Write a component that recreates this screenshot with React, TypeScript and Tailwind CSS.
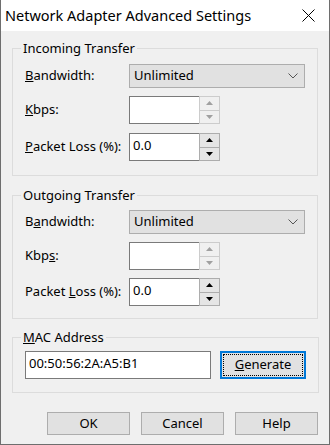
import React from "react";

const font = { fontFamily: '"Noto Sans", "Open Sans", sans-serif' };

function Combo() {
  return (
    <div className="w-[176px] h-[24px] bg-[#e1e1e1] border border-[#adadad] flex items-center pl-[4px] pr-[5px]">
      <span className="flex-1">Unlimited</span>
      <svg width="10" height="6" viewBox="0 0 10 6" className="mr-[1px]">
        <path d="M0.5 0.5 L5 5 L9.5 0.5" fill="none" stroke="#555" strokeWidth="1" />
      </svg>
    </div>
  );
}

function Arrow({ up, color }: { up: boolean; color: string }) {
  return (
    <svg width="7" height="4" viewBox="0 0 7 4">
      {up ? <path d="M0 4 L3.5 0 L7 4 Z" fill={color} /> : <path d="M0 0 L3.5 4 L7 0 Z" fill={color} />}
    </svg>
  );
}

function Spin({ value, disabled }: { value: string; disabled?: boolean }) {
  const bc = disabled ? "border-[#cccccc]" : "border-[#adadad]";
  const bg = disabled ? "bg-[#f0f0f0]" : "bg-[#e5e5e5]";
  const ac = disabled ? "#a0a0a0" : "#000";
  return (
    <div className="w-[91px] h-[28px] bg-white border border-[#7a7a7a] flex">
      <div className="flex-1 pl-[3px] pt-[2px] leading-[18px]">{value}</div>
      <div className="w-[21px] flex flex-col -my-[1px] -mr-[1px]">
        <div className={`flex-1 border ${bc} ${bg} flex items-center justify-center`}>
          <Arrow up color={ac} />
        </div>
        <div className={`flex-1 border border-t-0 ${bc} ${bg} flex items-center justify-center`}>
          <Arrow up={false} color={ac} />
        </div>
      </div>
    </div>
  );
}

function Row({ label, children, className }: { label: React.ReactNode; children: React.ReactNode; className?: string }) {
  return (
    <div className={`flex items-center ${className ?? ""}`}>
      <div className="w-[104px]">{label}</div>
      {children}
    </div>
  );
}

function Group({ title, children, className }: { title: React.ReactNode; children: React.ReactNode; className?: string }) {
  return (
    <fieldset className={`border border-[#dcdcdc] px-[12px] ${className ?? ""}`}>
      <legend className="ml-[-4px] px-[2px] leading-[18px]">{title}</legend>
      {children}
    </fieldset>
  );
}

function Btn({ children }: { children: React.ReactNode }) {
  return (
    <div className="w-[83px] h-[23px] bg-[#e1e1e1] border border-[#adadad] flex items-center justify-center">
      {children}
    </div>
  );
}

export default function App() {
  return (
    <div className="w-[330px] h-[445px] bg-[#f0f0f0] border-x border-b border-[#6e6e6e] flex flex-col text-[13px] text-black" style={font}>
      <div className="h-[31px] bg-white flex items-center pl-[4px] pr-[14px] shrink-0">
        <span className="flex-1 text-[14.5px]">Network Adapter Advanced Settings</span>
        <svg width="13" height="13" viewBox="0 0 13 13">
          <path d="M0.5 0.5 L12.5 12.5 M12.5 0.5 L0.5 12.5" stroke="#000" strokeWidth="1" />
        </svg>
      </div>
      <div className="px-[11px] flex flex-col">
        <Group title="Incoming Transfer" className="mt-[8px] pt-[7px] pb-[14px]">
          <Row label={<span><u>B</u>andwidth:</span>}>
            <Combo />
          </Row>
          <Row label={<span><u>K</u>bps:</span>} className="mt-[8px]">
            <Spin value="" disabled />
          </Row>
          <Row label={<span><u>P</u>acket Loss (%):</span>} className="mt-[9px]">
            <Spin value="0.0" />
          </Row>
        </Group>
        <Group title="Outgoing Transfer" className="mt-[10px] pt-[6px] pb-[12px]">
          <Row label={<span>B<u>a</u>ndwidth:</span>}>
            <Combo />
          </Row>
          <Row label={<span>Kbp<u>s</u>:</span>} className="mt-[8px]">
            <Spin value="" disabled />
          </Row>
          <Row label={<span>Packet <u>L</u>oss (%):</span>} className="mt-[8px]">
            <Spin value="0.0" />
          </Row>
        </Group>
        <Group title={<span><u>M</u>AC Address</span>} className="mt-[9px] pt-[5px] pb-[13px]">
          <div className="flex items-center gap-[9px]">
            <div className="w-[186px] h-[28px] bg-white border border-[#7a7a7a] pl-[3px] pt-[2px] leading-[18px]">00:50:56:2A:A5:B1</div>
            <div className="w-[86px] h-[28px] bg-[#e1e1e1] border-2 border-[#0078d7] p-[1px]">
              <div className="w-full h-full border border-dotted border-black flex items-center justify-center">
                <span><u>G</u>enerate</span>
              </div>
            </div>
          </div>
        </Group>
        <div className="flex justify-end gap-[11px] mt-[19px]">
          <Btn>OK</Btn>
          <Btn>Cancel</Btn>
          <Btn>Help</Btn>
        </div>
      </div>
    </div>
  );
}
